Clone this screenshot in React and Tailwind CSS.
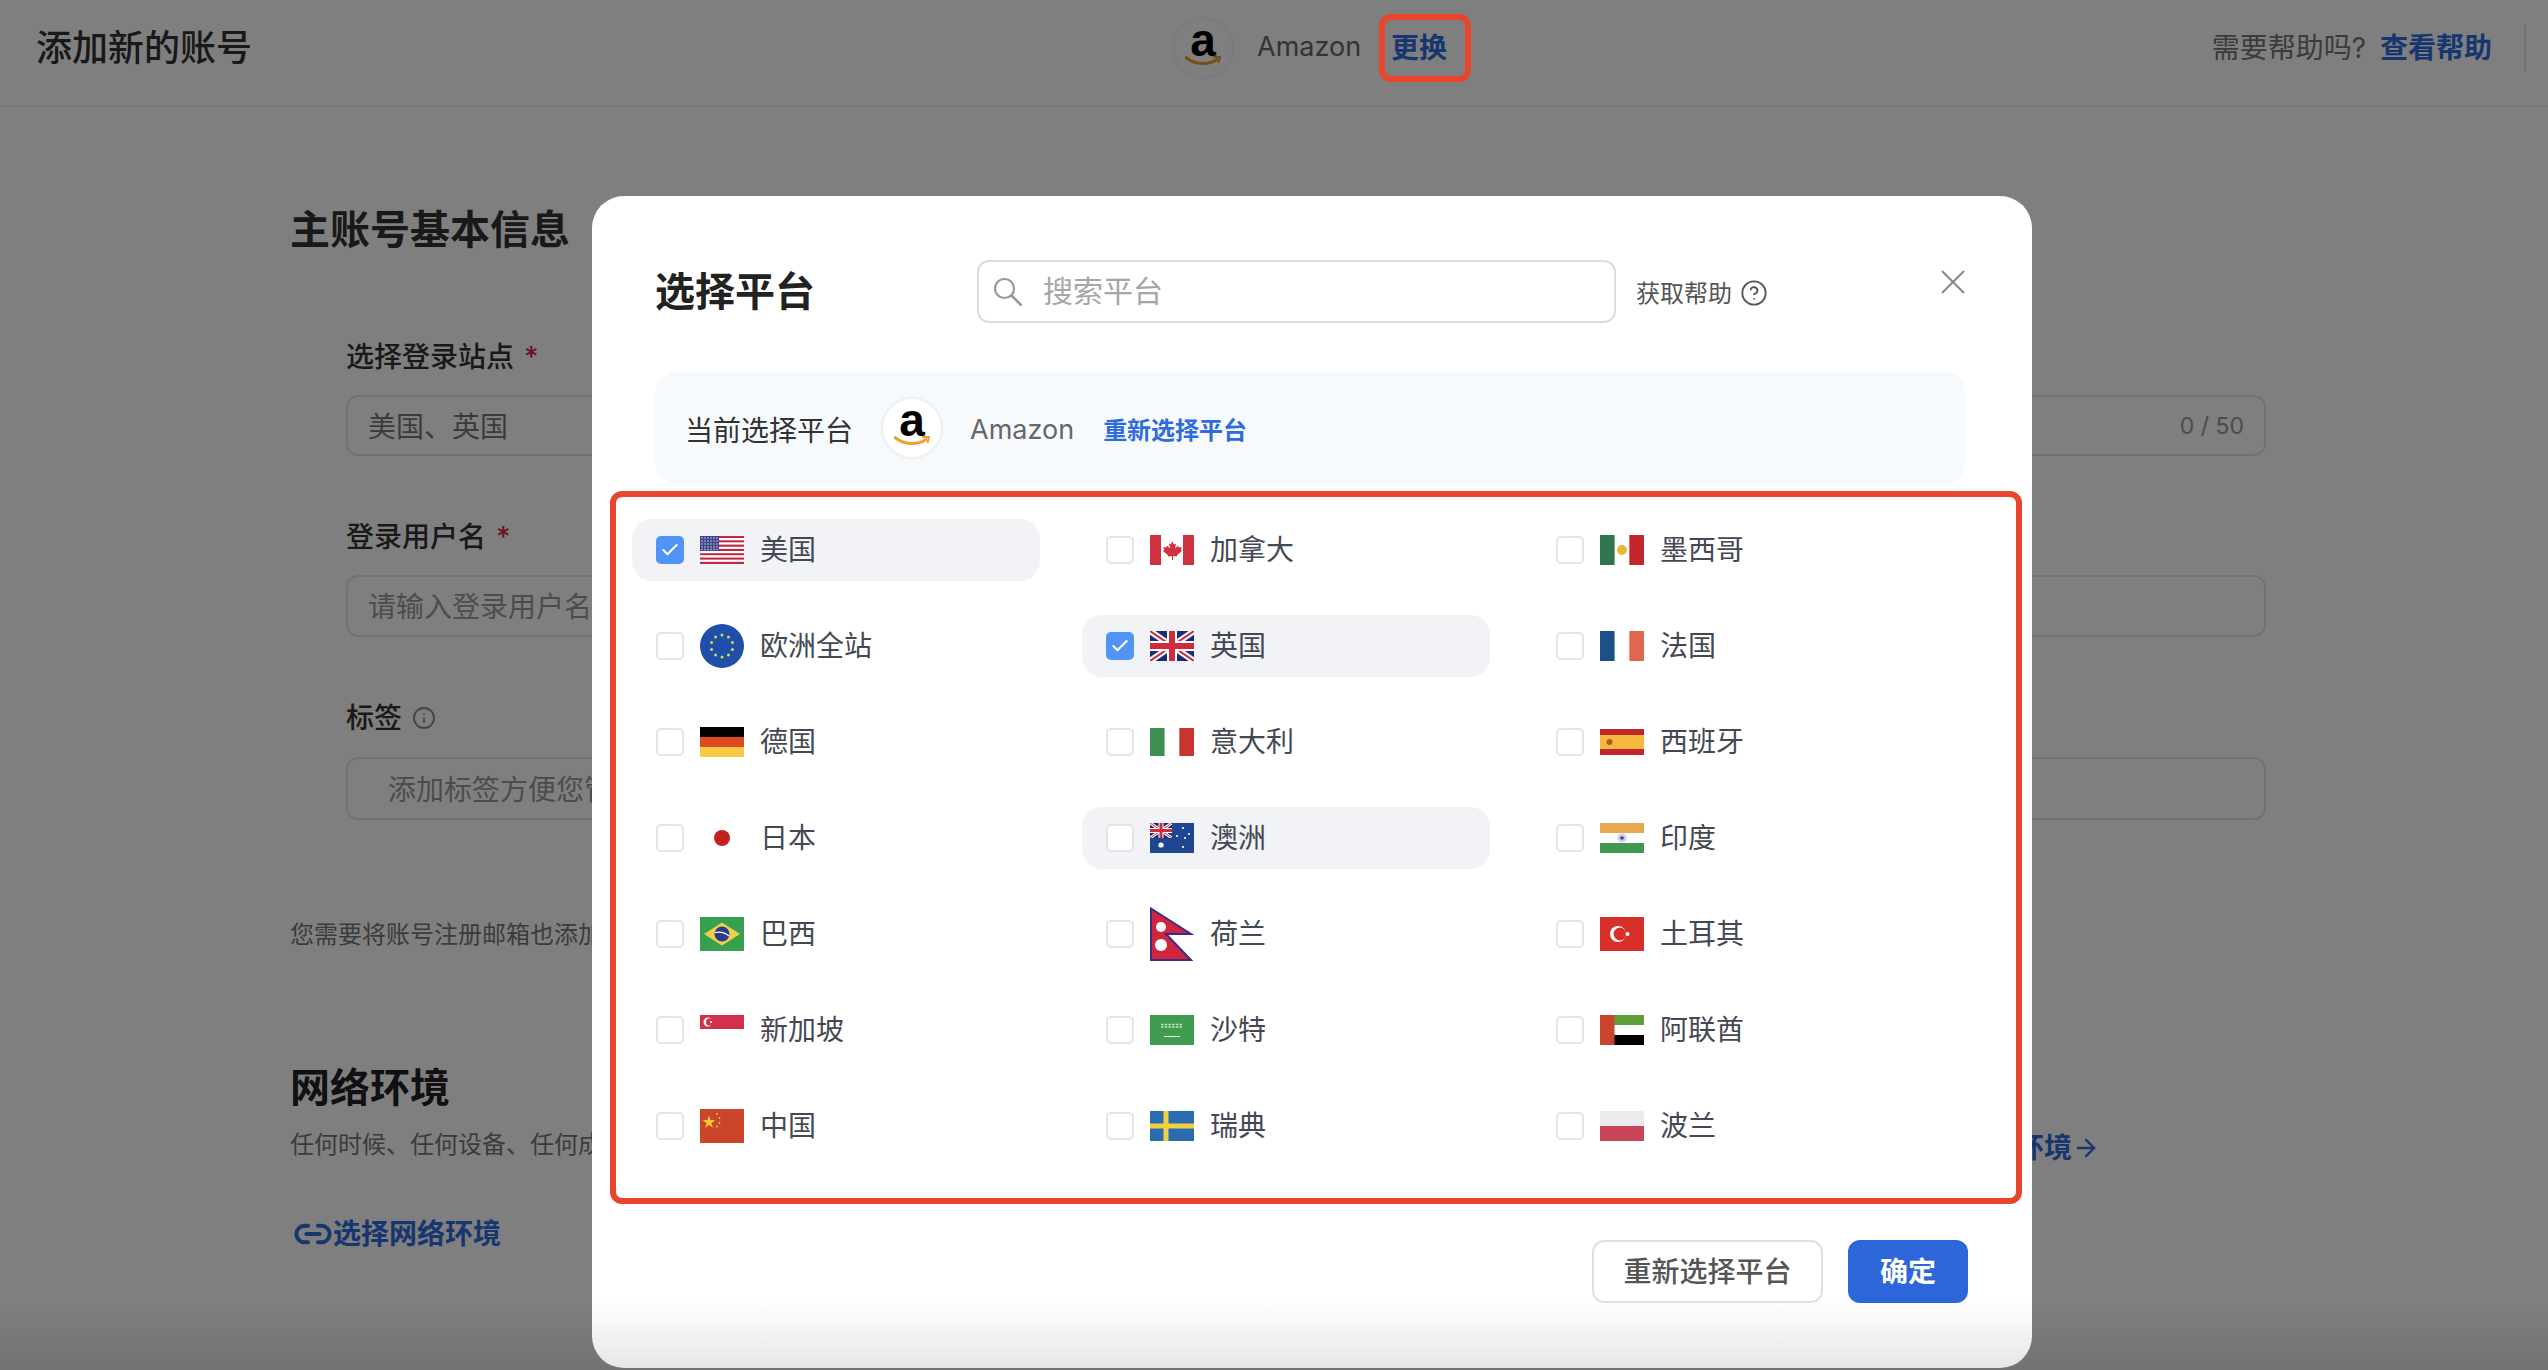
import React from "react";
import { ArrowRight, Check, CircleHelp, Info, Link2 } from "lucide-react";

const Stripes = ({ h, colors }) => (
  <>
    {colors.map((c, i) => (
      <rect key={i} x="0" y={(i * h) / colors.length} width="44" height={h / colors.length + 0.2} fill={c} />
    ))}
  </>
);

const Bars = ({ h, colors }) => (
  <>
    {colors.map((c, i) => (
      <rect key={i} x={(i * 44) / colors.length} y="0" width={44 / colors.length + 0.2} height={h} fill={c} />
    ))}
  </>
);

const Union = () => (
  <>
    <rect width="44" height="30" fill="#1a2c79" />
    <path d="M0 0L44 30M44 0L0 30" stroke="#fff" strokeWidth="6" />
    <path d="M0 0L44 30M44 0L0 30" stroke="#cf2b3a" strokeWidth="2" />
    <path d="M22 0V30M0 15H44" stroke="#fff" strokeWidth="10" />
    <path d="M22 0V30M0 15H44" stroke="#cf2b3a" strokeWidth="6" />
  </>
);

const flags = {
  us: {
    h: 28,
    body: (
      <>
        <Stripes h={28} colors={["#c0283f", "#fff", "#c0283f", "#fff", "#c0283f", "#fff", "#c0283f", "#fff", "#c0283f", "#fff", "#c0283f", "#fff", "#c0283f"]} />
        <rect width="19" height="15" fill="#3f4389" />
        {[2, 5, 8, 11, 14, 17].map((x) =>
          [2, 5, 8, 11, 13.5].map((y) => <circle key={`${x}-${y}`} cx={x} cy={y} r="0.7" fill="#e8e8f4" />)
        )}
      </>
    ),
  },
  ca: {
    h: 30,
    body: (
      <>
        <rect width="11" height="30" fill="#cf3340" />
        <rect x="33" width="11" height="30" fill="#cf3340" />
        <path d="M22 6l2 3.500 2-1-1 5 3-3 .8 2 3-.6-1 3.200 1.200 .8-4.800 4-.2 1.600-4-.6V25h-1v-4.100l-4 .6-.2-1.600-4.800-4 1.200-.8-1-3.200 3 .6.8-2 3 3-1-5 2 1z" fill="#cf3340" />
      </>
    ),
  },
  mx: {
    h: 30,
    body: (
      <>
        <Bars h={30} colors={["#2f7550", "#fff", "#c4262e"]} />
        <circle cx="22" cy="15" r="5" fill="#e6b93a" />
      </>
    ),
  },
  eu: {
    h: 44,
    body: (
      <>
        <circle cx="22" cy="22" r="22" fill="#1f4fa8" />
        {Array.from({ length: 10 }).map((_, i) => (
          <circle key={i} cx={22 + 11 * Math.sin((i * Math.PI) / 5)} cy={22 - 11 * Math.cos((i * Math.PI) / 5)} r="1.5" fill="#d5d65a" />
        ))}
      </>
    ),
  },
  uk: { h: 30, body: <Union /> },
  fr: { h: 30, body: <Bars h={30} colors={["#1d5089", "#fff", "#e0664f"]} /> },
  de: { h: 30, body: <Stripes h={30} colors={["#000", "#dd4b21", "#f8c945"]} /> },
  it: { h: 28, body: <Bars h={28} colors={["#3f8f52", "#fff", "#c8352f"]} /> },
  es: {
    h: 26,
    body: (
      <>
        <rect width="44" height="26" fill="#c4262e" />
        <rect y="6" width="44" height="14" fill="#f4b93e" />
        <circle cx="9.500" cy="13" r="3" fill="#b5562a" />
      </>
    ),
  },
  jp: { h: 30, body: <circle cx="22" cy="15" r="8" fill="#c3211f" /> },
  au: {
    h: 30,
    body: (
      <>
        <rect width="44" height="30" fill="#1f4690" />
        <svg x="0" y="0" width="22" height="15" viewBox="0 0 44 30">
          <Union />
        </svg>
        <circle cx="11" cy="22" r="2.600" fill="#fff" />
        {[[33, 5], [33, 24], [27, 13], [39, 11], [35, 15]].map(([x, y]) => (
          <circle key={x + y} cx={x} cy={y} r="1.100" fill="#fff" />
        ))}
      </>
    ),
  },
  in: {
    h: 30,
    body: (
      <>
        <Stripes h={30} colors={["#e7a94f", "#fff", "#3d9a4e"]} />
        <circle cx="22" cy="15" r="4.500" fill="#cfcde8" />
        <circle cx="22" cy="15" r="1.800" fill="#3f3f9c" />
      </>
    ),
  },
  br: {
    h: 34,
    body: (
      <>
        <rect width="44" height="34" fill="#37a04f" />
        <path d="M22 5.500L40 17 22 28.500 4 17z" fill="#efd04a" />
        <circle cx="22" cy="17" r="7.500" fill="#2d3a8c" />
        <path d="M15 15.500c5-1 10 0 14 3.500" stroke="#fff" strokeWidth="1.200" fill="none" />
      </>
    ),
  },
  np: {
    h: 54,
    body: (
      <>
        <path d="M1 1.500L41 27 16 27 41 53H1z" fill="#d1243f" stroke="#3a2d86" strokeWidth="2" />
        <circle cx="11" cy="20" r="5" fill="#fff" />
        <circle cx="11" cy="38" r="6" fill="#fff" />
      </>
    ),
  },
  tr: {
    h: 34,
    body: (
      <>
        <rect width="44" height="34" fill="#d7302a" />
        <circle cx="18" cy="17" r="8" fill="#fff" />
        <circle cx="20" cy="17" r="6.400" fill="#d7302a" />
        <circle cx="27.500" cy="17" r="2" fill="#fff" />
      </>
    ),
  },
  sg: {
    h: 30,
    body: (
      <>
        <rect width="44" height="14" fill="#d2304d" />
        <circle cx="8" cy="7" r="4.500" fill="#fff" />
        <circle cx="9.800" cy="7" r="3.800" fill="#d2304d" />
        <circle cx="11" cy="7" r="1.100" fill="#fff" />
      </>
    ),
  },
  sa: {
    h: 30,
    body: (
      <>
        <rect width="44" height="30" fill="#3f9c4f" />
        <path d="M11 9.500h22M11 12h22" stroke="#c7e5c9" strokeWidth="1.600" strokeDasharray="2.500 1.200" />
        <path d="M14 21.500h16" stroke="#eef8ee" strokeWidth="1.100" />
      </>
    ),
  },
  ae: {
    h: 30,
    body: (
      <>
        <Stripes h={30} colors={["#5d9f35", "#fff", "#000"]} />
        <rect width="14.500" height="30" fill="#c9432f" />
      </>
    ),
  },
  cn: {
    h: 34,
    body: (
      <>
        <rect width="44" height="34" fill="#ca452a" />
        <path d="M9 6.500l1.600 4.600 4.800.1-3.900 2.900 1.400 4.600-3.900-2.800-3.900 2.800 1.400-4.600-3.900-2.900 4.800-.1z" fill="#f5c92f" />
        {[[17, 5], [19.5, 9], [19.5, 14], [17, 17.5]].map(([x, y]) => (
          <circle key={y} cx={x} cy={y} r="0.900" fill="#f5c92f" />
        ))}
      </>
    ),
  },
  se: {
    h: 30,
    body: (
      <>
        <rect width="44" height="30" fill="#2b6cb0" />
        <path d="M16 0V30M0 15H44" stroke="#f3d03e" strokeWidth="5" />
      </>
    ),
  },
  pl: { h: 30, body: <Stripes h={30} colors={["#ececec", "#c9455a"]} /> },
};

const countries = [
  { name: "美国", flag: "us", checked: true },
  { name: "加拿大", flag: "ca" },
  { name: "墨西哥", flag: "mx" },
  { name: "欧洲全站", flag: "eu" },
  { name: "英国", flag: "uk", checked: true },
  { name: "法国", flag: "fr" },
  { name: "德国", flag: "de" },
  { name: "意大利", flag: "it" },
  { name: "西班牙", flag: "es" },
  { name: "日本", flag: "jp" },
  { name: "澳洲", flag: "au", active: true },
  { name: "印度", flag: "in" },
  { name: "巴西", flag: "br" },
  { name: "荷兰", flag: "np" },
  { name: "土耳其", flag: "tr" },
  { name: "新加坡", flag: "sg" },
  { name: "沙特", flag: "sa" },
  { name: "阿联酋", flag: "ae" },
  { name: "中国", flag: "cn" },
  { name: "瑞典", flag: "se" },
  { name: "波兰", flag: "pl" },
];

const Flag = ({ code }) => {
  const { h, body } = flags[code];
  return (
    <svg width="44" height={h} viewBox={`0 0 44 ${h}`} className="shrink-0">
      {body}
    </svg>
  );
};

const AmazonLogo = () => (
  <div className="flex h-[58px] w-[58px] shrink-0 flex-col items-center justify-center rounded-full bg-white shadow-[0_0_4px_rgba(0,0,0,0.12)]">
    <span className="h-[26px] font-['Liberation_Sans',sans-serif] text-[46px] font-bold leading-[22px] text-black">a</span>
    <svg width="36" height="11" viewBox="0 0 36 11" className="mt-[1px]">
      <path d="M1 1.500c9 7.500 22 8 31 2" stroke="#ef9f2c" strokeWidth="3" fill="none" strokeLinecap="round" />
      <path d="M28 1l7 0-1.500 6" stroke="#ef9f2c" strokeWidth="2" fill="none" />
    </svg>
  </div>
);

const Field = ({ children, className }) => (
  <div className={`flex w-[1920px] items-center justify-between rounded-xl border-2 border-[#e4e4e4] pt-[2px] text-[28px] text-[#999] ${className}`}>
    {children}
  </div>
);

const Label = ({ text, required, children }) => (
  <div className="flex h-[42px] items-center pt-[3px] text-[28px] font-medium leading-[42px] text-[#333]">
    {text}
    {required && <span className="ml-[10px] text-[#d9263c]">*</span>}
    {children}
  </div>
);

const Country = ({ item }) => (
  <div className={`flex h-[62px] items-center rounded-[20px] pl-[24px] ${item.checked || item.active ? "bg-[#f1f3f6]" : ""}`}>
    <span
      className={`flex h-[28px] w-[28px] shrink-0 items-center justify-center rounded-[5px] border-2 ${
        item.checked ? "border-[#5094f5] bg-[#5094f5]" : "border-[#e4e4e4] bg-white"
      }`}
    >
      {item.checked && <Check size={20} strokeWidth={2.5} className="text-white" />}
    </span>
    <span className="ml-[16px] flex w-[44px] shrink-0 items-center justify-center">
      <Flag code={item.flag} />
    </span>
    <span className="ml-[16px] text-[28px] leading-[40px] text-[#444852]">{item.name}</span>
  </div>
);

export default function App() {
  return (
    <div className="relative h-[1370px] w-full overflow-hidden bg-white font-[Inter,'Noto_Sans_CJK_SC',sans-serif]">
      <header className="flex h-[107px] items-center border-b-2 border-[#ececec] pb-[10px] pl-[36px] pr-[22px]">
        <h1 className="w-[1138px] text-[36px] font-medium text-[#333]">添加新的账号</h1>
        <AmazonLogo />
        <span className="ml-[25px] text-[27px] text-[#666]">Amazon</span>
        <span className="relative ml-[30px] text-[28px] font-semibold text-[#2f6bdc]">
          更换
          <span className="absolute -bottom-[13px] -left-[12px] -right-[24px] -top-[13px] z-20 rounded-xl border-[6px] border-[#e8452c]" />
        </span>
        <span className="ml-auto text-[28px] text-[#777]">需要帮助吗?</span>
        <span className="ml-[14px] text-[28px] font-semibold text-[#2f6bdc]">查看帮助</span>
        <span className="ml-[32px] h-[48px] w-[2px] bg-[#e4e4e4]" />
      </header>

      <main className="pl-[290px]">
        <h2 className="mt-[95px] text-[40px] font-bold leading-[56px] text-[#333]">主账号基本信息</h2>
        <div className="ml-[56px]">
          <div className="mt-[76px]">
            <Label text="选择登录站点" required />
          </div>
          <Field className="mt-[19px] h-[61px] pl-[20px] pr-[20px]">
            <span className="text-[#777]">美国、英国</span>
            <span className="text-[23px]">0 / 50</span>
          </Field>
          <div className="mt-[58px]">
            <Label text="登录用户名" required />
          </div>
          <Field className="mt-[19px] h-[62px] pl-[20px]">请输入登录用户名</Field>
          <div className="mt-[58px]">
            <Label text="标签">
              <Info size={24} strokeWidth={1.8} className="ml-[10px] text-[#888]" />
            </Label>
          </div>
          <Field className="mt-[20px] h-[63px] pl-[40px]">添加标签方便您管理</Field>
        </div>
        <p className="mt-[97px] text-[24px] leading-[36px] text-[#777]">您需要将账号注册邮箱也添加</p>
        <h2 className="mt-[107px] text-[40px] font-bold leading-[56px] text-[#222]">网络环境</h2>
        <div className="mt-[11px] flex h-[36px] w-[1810px] items-start justify-between">
          <p className="text-[24px] leading-[36px] text-[#777]">任何时候、任何设备、任何成</p>
          <span className="mt-[3px] flex items-center text-[28px] font-semibold leading-[36px] text-[#2f6bdc]">
            网络环境
            <ArrowRight size={28} strokeWidth={2} />
          </span>
        </div>
        <div className="mt-[51px] ml-[3px] flex items-center text-[28px] font-semibold leading-[40px] text-[#2f6bdc]">
          <Link2 size={40} strokeWidth={2.4} />
          选择网络环境
        </div>
      </main>

      {/* dim layer + modal */}
      <div className="absolute inset-0 z-10 bg-black/50" />
      <section className="absolute left-[592px] top-[196px] z-10 flex h-[1172px] w-[1440px] flex-col rounded-[32px] bg-white pt-[64px]">
        <div className="flex items-center pl-[63px]">
          <h3 className="w-[322px] text-[40px] font-bold leading-[56px] text-[#222]">选择平台</h3>
          <div className="flex h-[63px] w-[639px] items-center rounded-xl border-2 border-[#dcdcdc] pl-[14px]">
            <svg width="30" height="30" viewBox="0 0 30 30" className="shrink-0">
              <circle cx="11.500" cy="11.500" r="9.500" fill="none" stroke="#999" strokeWidth="2.200" />
              <path d="M18.500 18.500L28.500 28.500" stroke="#999" strokeWidth="2.600" />
            </svg>
            <span className="ml-[20px] text-[30px] text-[#a6a6a6]">搜索平台</span>
          </div>
          <span className="ml-[20px] mt-[4px] text-[24px] text-[#555]">获取帮助</span>
          <CircleHelp size={28} strokeWidth={1.6} className="ml-[8px] mt-[2px] text-[#555]" />
          <svg width="24" height="24" viewBox="0 0 24 24" className="ml-auto mr-[67px] -mt-[20px]">
            <path d="M1 1L23 23M23 1L1 23" stroke="#888" strokeWidth="2" />
          </svg>
        </div>

        <div className="ml-[63px] mt-[48px] flex h-[114px] w-[1311px] shrink-0 items-center rounded-[24px] bg-[#f7fafc] pl-[30px]">
          <span className="mt-[5px] text-[28px] text-[#333]">当前选择平台</span>
          <span className="ml-[30px]">
            <AmazonLogo />
          </span>
          <span className="ml-[29px] mt-[5px] text-[27px] text-[#666]">Amazon</span>
          <span className="ml-[29px] mt-[5px] text-[24px] font-semibold text-[#2f6bdc]">重新选择平台</span>
        </div>

        <div className="ml-[18px] mt-[6px] h-[713px] w-[1412px] shrink-0 rounded-xl border-[6px] border-[#e8452c] pl-[16px] pt-[22px]">
          <div className="grid w-[1308px] grid-cols-3 gap-x-[42px] gap-y-[34px]">
            {countries.map((item) => (
              <Country key={item.name} item={item} />
            ))}
          </div>
        </div>

        <div className="mt-[36px] flex justify-end gap-[25px] pr-[64px]">
          <button className="h-[63px] w-[231px] rounded-xl border-2 border-[#e0e0e0] bg-white text-[28px] font-medium text-[#555]">
            重新选择平台
          </button>
          <button className="h-[63px] w-[120px] rounded-xl bg-[#2d66d9] text-[28px] font-bold text-white">确定</button>
        </div>
      </section>

      {/* bottom fade of the capture */}
      <div className="pointer-events-none absolute inset-x-0 bottom-0 z-30 h-[70px] bg-gradient-to-b from-transparent to-black/10" />
    </div>
  );
}
